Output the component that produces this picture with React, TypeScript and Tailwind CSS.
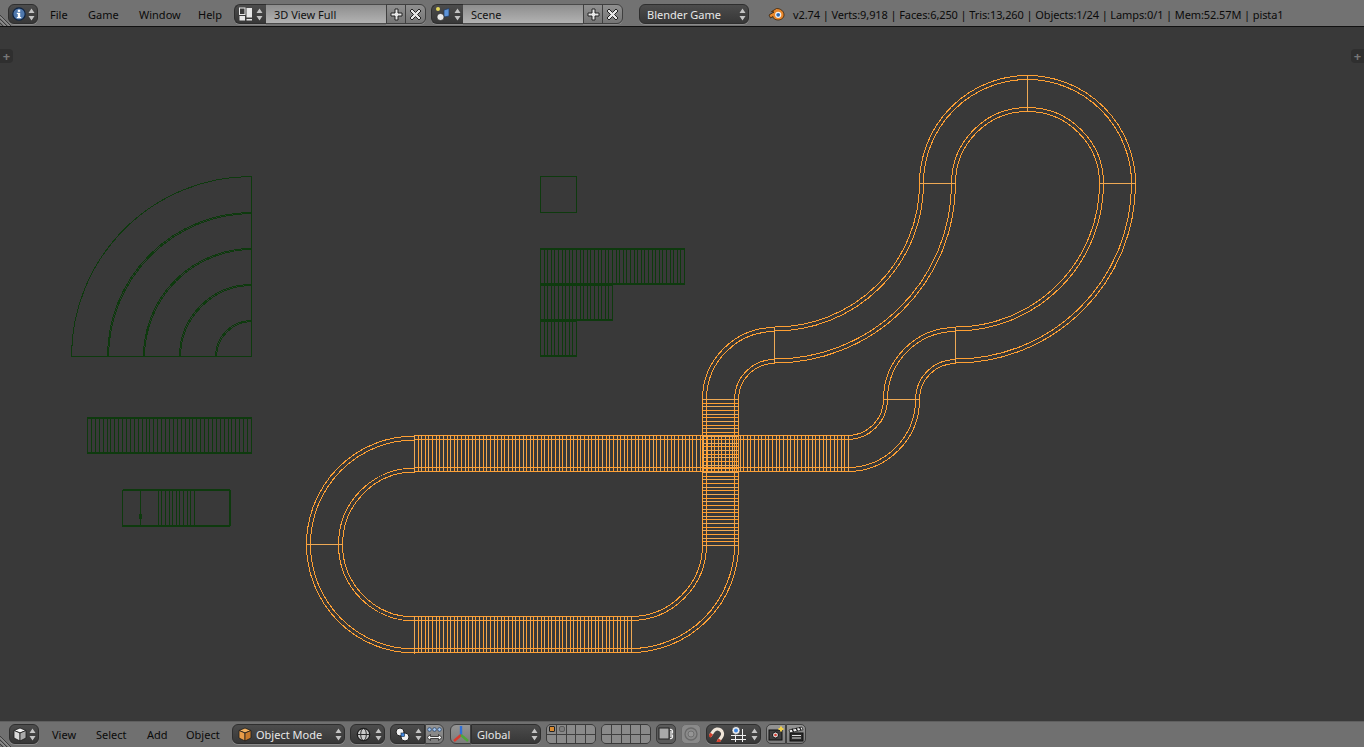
import React from "react";

const font = "font-['Noto_Sans',sans-serif]";
const dark = "bg-linear-to-b from-[#4c4c4c] to-[#373737] border border-[#2e2e2e] shadow-[0_1px_0_#8a8a8a]";
const grey = "bg-linear-to-b from-[#8f8f8f] to-[#767676] border border-[#3f3f3f] shadow-[0_1px_0_#8a8a8a]";
const toggle = "bg-linear-to-b from-[#949494] to-[#7c7c7c] border border-[#3f3f3f]";

function Arrows({ c = "#c4c4c4" }: { c?: string }) {
  return (
    <svg width="7" height="13" viewBox="0 0 7 13" className="shrink-0">
      <path d="M3.5 0.5L6.5 5H.5z M.5 8H6.5L3.5 12.5z" fill={c} />
    </svg>
  );
}

function Menu({ label, className }: { label: string; className: string }) {
  return <span className={`text-[11px] leading-none text-[#0a0a0a] ${className}`}>{label}</span>;
}

function Hatch() {
  return (
    <svg width="12" height="12" viewBox="0 0 12 12" className="shrink-0">
      <path d="M0 1L11 12M0 5L7 12M0 9L3 12" stroke="#3c3c3c" strokeWidth="1" />
      <path d="M0 2.5L9.5 12M0 6.5L5.5 12" stroke="#a0a0a0" strokeWidth="1" />
    </svg>
  );
}

function InfoIcon() {
  return (
    <svg width="14" height="14" viewBox="0 0 14 14">
      <circle cx="7" cy="7" r="6.2" fill="#4f78ad" stroke="#10233f" strokeWidth="1.2" />
      <rect x="5.8" y="2.7" width="2.4" height="2.2" fill="#fff" />
      <path d="M4.8 5.8H8.2V10H9.2V11.2H4.8V10H5.8V7H4.8z" fill="#fff" />
    </svg>
  );
}

function LayoutIcon() {
  return (
    <svg width="14" height="14" viewBox="0 0 14 14">
      <rect x="0.5" y="1" width="5.5" height="6.5" fill="#3a3a3a" stroke="#e8e8e8" />
      <rect x="0.5" y="9" width="5.5" height="4.5" fill="#e8e8e8" />
      <rect x="7.5" y="1" width="5.5" height="9.5" fill="#e8e8e8" />
      <rect x="7.5" y="12" width="5.5" height="1.5" fill="#e8e8e8" />
    </svg>
  );
}

function SceneIcon() {
  return (
    <svg width="16" height="16" viewBox="0 0 16 16">
      <circle cx="3" cy="3" r="2" fill="#e3d65c" />
      <path d="M9 4L14 2.5V10L9 11z" fill="#5d93d8" stroke="#1f3a63" strokeWidth=".7" />
      <circle cx="5.5" cy="11" r="3.6" fill="#e8e8e8" stroke="#222" strokeWidth=".7" />
    </svg>
  );
}

function Plus() {
  return (
    <svg width="13" height="13" viewBox="0 0 13 13">
      <path d="M5 1H8V5H12V8H8V12H5V8H1V5H5z" fill="#e6e6e6" stroke="#222" strokeWidth="1" />
    </svg>
  );
}

function Cross() {
  return (
    <svg width="13" height="13" viewBox="0 0 13 13">
      <path d="M3 1L6.5 4.5L10 1L12 3L8.5 6.5L12 10L10 12L6.5 8.5L3 12L1 10L4.5 6.5L1 3z" fill="#e6e6e6" stroke="#222" strokeWidth="1" />
    </svg>
  );
}

function NamedField({ icon, label, w, last }: { icon: React.ReactNode; label: string; w: string; last: string }) {
  return (
    <div className={`flex h-[20px] shrink-0 items-stretch ${last}`}>
      <div className={`${dark} flex w-[32px] items-center justify-center gap-[3px] rounded-l-[6px] border-r-0`}>
        {icon}
        <Arrows />
      </div>
      <div className={`bg-linear-to-b from-[#8e8e8e] to-[#b2b2b2] border-y border-[#4a4a4a] flex items-center pl-[8px] pt-[2px] text-[11px] text-[#111] ${w}`}>
        {label}
      </div>
      <div className={`${grey} flex w-[20px] items-center justify-center`}>
        <Plus />
      </div>
      <div className={`${grey} -ml-px flex w-[21px] items-center justify-center rounded-r-[6px]`}>
        <Cross />
      </div>
    </div>
  );
}

function BlenderLogo() {
  return (
    <svg width="17" height="14" viewBox="0 0 17 14">
      <path d="M1 8L6 5L3.5 4.6L8.5 1.5C12.5 1.5 16 4 16 8C16 11 13 13 10 13C7 13 5 11.3 5 9.5L2.5 11z" fill="#e8872c" stroke="#2a1500" strokeWidth=".7" />
      <circle cx="10.2" cy="7.8" r="3.1" fill="#f4f4f4" />
      <circle cx="10.2" cy="7.8" r="1.9" fill="#2d6bb5" />
    </svg>
  );
}

function Cube({ top, left, right }: { top: string; left: string; right: string }) {
  return (
    <svg width="14" height="15" viewBox="0 0 14 15">
      <path d="M7 1L13 3.5L7 6L1 3.5z" fill={top} stroke="#1c1c1c" strokeWidth=".8" />
      <path d="M1 3.5L7 6V14L1 11z" fill={left} stroke="#1c1c1c" strokeWidth=".8" />
      <path d="M13 3.5L7 6V14L13 11z" fill={right} stroke="#1c1c1c" strokeWidth=".8" />
    </svg>
  );
}

function Globe() {
  return (
    <svg width="15" height="15" viewBox="0 0 15 15" fill="none">
      <circle cx="7.5" cy="7.5" r="6.2" fill="#c9c9c9" stroke="#1a1a1a" strokeWidth="1.2" />
      <ellipse cx="7.5" cy="7.5" rx="2.8" ry="6" stroke="#2a2a2a" />
      <path d="M1.5 7.5H13.5" stroke="#2a2a2a" />
    </svg>
  );
}

function PivotIcon() {
  return (
    <svg width="15" height="15" viewBox="0 0 15 15">
      <circle cx="5" cy="5" r="4" fill="#f0f0f0" stroke="#222" />
      <circle cx="10" cy="10" r="4" fill="#f0f0f0" stroke="#222" />
      <rect x="6" y="6" width="3.5" height="3.5" fill="#3f86e0" stroke="#123" strokeWidth=".6" />
    </svg>
  );
}

function SnapTarget() {
  return (
    <svg width="17" height="17" viewBox="0 0 17 17" fill="none">
      <path d="M5.5 3V16M12.5 3V16M1 9.5H16M1 13.5H16" stroke="#f0f0f0" />
      <circle cx="6" cy="4.5" r="4" fill="#f0f0f0" stroke="#222" strokeWidth=".6" />
      <circle cx="6" cy="4.5" r="2" fill="#3f86e0" />
    </svg>
  );
}

function Layers({ marks }: { marks?: boolean }) {
  const cells = Array.from({ length: 10 }, (_, i) => i);
  return (
    <div className="grid h-[20px] w-[50px] shrink-0 grid-cols-5 grid-rows-2 overflow-hidden rounded-[5px] border border-[#3a3a3a] bg-[#3f3f3f] gap-px">
      {cells.map((i) => (
        <div key={i} className="relative bg-[#8a8a8a]">
          {marks && i === 0 && <div className="absolute left-[2px] top-[1px] h-[6px] w-[6px] rounded-[1px] bg-[#d98a30] border border-[#222]" />}
          {marks && i === 1 && <div className="absolute left-[2px] top-[1px] h-[6px] w-[6px] rounded-[2px] bg-[#7d7d7d] border border-[#5a5a5a]" />}
        </div>
      ))}
    </div>
  );
}

type Arc = { cx: number; cy: number; rx: number; ry: number; a: number; b: number };
const arcs: Arc[] = [
  { cx: 414.5, cy: 544.5, rx: 90, ry: 90.5, a: 90, b: 270 },
  { cx: 630.5, cy: 544.5, rx: 90, ry: 90, a: 90, b: 0 },
  { cx: 774.5, cy: 399.5, rx: 54, ry: 54, a: 180, b: 270 },
  { cx: 774.5, cy: 183.5, rx: 163, ry: 161.5, a: 90, b: 0 },
  { cx: 1027.5, cy: 183.5, rx: 90, ry: 90, a: 180, b: 360 },
  { cx: 955.5, cy: 183.5, rx: 162, ry: 161.5, a: 0, b: 90 },
  { cx: 955.5, cy: 399.5, rx: 54, ry: 54, a: 270, b: 180 },
  { cx: 847.5, cy: 399.5, rx: 54, ry: 54, a: 0, b: 90 },
];
const offs = [-18, -14, 14, 18];
function arcPath(k: Arc, d: number) {
  const r = (n: number) => (n * Math.PI) / 180;
  const x1 = k.cx + (k.rx + d) * Math.cos(r(k.a));
  const y1 = k.cy + (k.ry + d) * Math.sin(r(k.a));
  const x2 = k.cx + (k.rx + d) * Math.cos(r(k.b));
  const y2 = k.cy + (k.ry + d) * Math.sin(r(k.b));
  const large = Math.abs(k.b - k.a) > 180 ? 1 : 0;
  return `M${x1} ${y1}A${k.rx + d} ${k.ry + d} 0 ${large} ${k.b > k.a ? 1 : 0} ${x2} ${y2}`;
}
const OR = "#ffa033";
const OR2 = "#eea955";

function rungsV(x0: number, x1: number, n: number, y0: number, y1: number) {
  return Array.from({ length: n + 1 }, (_, i) => {
    const x = Math.round(x0 + ((x1 - x0) * i) / n) + 0.5;
    return <path key={i} d={`M${x} ${y0}V${y1}`} stroke={i % 2 ? OR : OR2} />;
  });
}
function rungsH(y0: number, y1: number, n: number, x0: number, x1: number) {
  return Array.from({ length: n + 1 }, (_, i) => {
    const y = Math.round(y0 + ((y1 - y0) * i) / n) + 0.5;
    return <path key={i} d={`M${x0} ${y}H${x1}`} stroke={i % 2 ? OR : OR2} />;
  });
}

function Strip({ x, y, w, h, n }: { x: number; y: number; w: number; h: number; n: number }) {
  const lines = Array.from({ length: n + 1 }, (_, i) => Math.round(x + (w * i) / n) + 0.5);
  const e = x + w + 1;
  return (
    <g>
      {lines.map((l, i) => (
        <path key={i} d={`M${l} ${y}V${y + h}`} />
      ))}
      <path d={`M${x} ${y + 0.5}H${e}M${x} ${y + 1.5}H${e}M${x} ${y + h + 0.5}H${e}M${x} ${y + h - 0.5}H${e}`} />
    </g>
  );
}

function Track() {
  return (
    <g fill="none" stroke={OR} strokeWidth="1" shapeRendering="crispEdges">
      {arcs.flatMap((k, i) => offs.map((d) => <path key={`${i}${d}`} d={arcPath(k, d)} />))}
      {[435.5, 439.5, 467.5, 471.5].map((y) => <path key={y} d={`M414 ${y}H848`} />)}
      {[616.5, 620.5, 648.5, 652.5].map((y) => <path key={y} d={`M414 ${y}H631`} />)}
      {[702.5, 706.5, 734.5, 738.5].map((x) => <path key={x} d={`M${x} 399V545`} />)}
      {rungsV(414, 848, 120, 435, 472)}
      {rungsV(414, 631, 60, 616, 653)}
      {rungsH(399, 545, 40, 702, 739)}
      <g stroke={OR2}>
        <path d="M919.5 183.5H955.5M1099.5 183.5H1135.5M1027.5 75.5V111.5M774.5 327V363M955.5 327V363M883.5 399.5H919.5M306.5 544.5H342.5" />
      </g>
    </g>
  );
}

function UVs() {
  const radii = [36, 72, 108, 144];
  return (
    <g fill="none" stroke="#0e3a0e" strokeWidth="1" shapeRendering="crispEdges">
      <path d="M251.5 176.5V356.5H71.5" />
      <path d="M71.5 356.5A180 180 0 0 1 251.5 176.5" />
      {radii.map((r) => (
        <g key={r}>
          <path d={`M${251.5 - r} 356.5A${r} ${r} 0 0 1 251.5 ${356.5 - r}`} />
          <path d={`M${252.5 - r} 356.5A${r} ${r} 0 0 1 251.5 ${357.5 - r}`} />
        </g>
      ))}
      <path d="M540.5 176.5H576.5V212.5H540.5z" />
      <Strip x={540} y={248} w={144} h={36} n={40} />
      <Strip x={540} y={284} w={72} h={36} n={20} />
      <Strip x={540} y={320} w={36} h={36} n={10} />
      <Strip x={87} y={417} w={164} h={36} n={42} />
      <path d="M122.5 490.5H229.5V525.5H122.5z M122.5 489.5H229.5M230.5 490V526M122 526.5H230" />
      {[140, 158, 161, 165, 169, 172, 176, 179, 183, 187, 190, 194].map((x) => (
        <path key={x} d={`M${x + 0.5} 490V526`} />
      ))}
      <rect x="139" y="514" width="3" height="5" fill="#0e3a0e" stroke="none" />
    </g>
  );
}

export default function App() {
  return (
    <div className={`${font} flex h-[747px] w-[1364px] flex-col overflow-hidden bg-[#393939]`}>
      {/* top bar */}
      <header className="relative flex h-[27px] shrink-0 items-center border-b border-[#111] bg-[#727272] pt-[2px]">
        <div className="absolute bottom-0 left-0"><Hatch /></div>
        <div className={`${dark} ml-[8px] flex h-[20px] w-[30px] items-center justify-center gap-[2px] rounded-[6px]`}>
          <InfoIcon />
          <Arrows />
        </div>
        <Menu label="File" className="ml-[12px] w-[38px]" />
        <Menu label="Game" className="w-[51px]" />
        <Menu label="Window" className="w-[59px]" />
        <Menu label="Help" className="w-[36px]" />
        <NamedField icon={<LayoutIcon />} label="3D View Full" w="w-[120px]" last="" />
        <NamedField icon={<SceneIcon />} label="Scene" w="w-[120px]" last="ml-[5px]" />
        <div className={`${dark} ml-[16px] flex h-[20px] w-[110px] items-center justify-between rounded-[6px] pl-[7px] pr-[2px] text-[11px] text-[#e8e8e8]`}>
          <span className="pt-[2px]">Blender Game</span>
          <Arrows />
        </div>
        <div className="ml-[19px]"><BlenderLogo /></div>
        <span className="ml-[8px] whitespace-nowrap pt-[2px] text-[11px] tracking-[-0.1px] text-[#0a0a0a]">
          v2.74 | Verts:9,918 | Faces:6,250 | Tris:13,260 | Objects:1/24 | Lamps:0/1 | Mem:52.57M | pista1
        </span>
      </header>

      {/* viewport */}
      <main className="relative min-h-0 flex-1">
        <svg className="block h-full w-full" viewBox="0 27 1364 694">
          <UVs />
          <Track />
        </svg>
        <div className="absolute left-0 top-[22px] flex h-[14px] w-[13px] items-center justify-center rounded-r-[4px] bg-[#2f2f2f] text-[13px] font-bold leading-none text-[#777]">+</div>
        <div className="absolute right-0 top-[22px] flex h-[14px] w-[13px] items-center justify-center rounded-l-[4px] bg-[#2f2f2f] text-[13px] font-bold leading-none text-[#777]">+</div>
      </main>

      {/* bottom bar */}
      <footer className="relative flex h-[26px] shrink-0 items-center border-t border-[#5f5f5f] bg-[#707070] pb-[1px]">
        <div className="absolute bottom-0 left-0"><Hatch /></div>
        <div className={`${dark} ml-[9px] flex h-[20px] w-[30px] items-center justify-center gap-[2px] rounded-[6px]`}>
          <Cube top="#f4f4f4" left="#dcdcdc" right="#a9a9a9" />
          <Arrows />
        </div>
        <Menu label="View" className="ml-[13px] w-[44px]" />
        <Menu label="Select" className="w-[51px]" />
        <Menu label="Add" className="w-[39px]" />
        <Menu label="Object" className="w-[46px]" />
        <div className={`${dark} flex h-[20px] w-[113px] items-center justify-between rounded-[6px] pl-[5px] pr-[2px] text-[11px] text-[#e8e8e8]`}>
          <span className="flex items-center gap-[4px]">
            <Cube top="#f0b060" left="#e89c48" right="#c77a2c" />
            <span className="pt-[2px]">Object Mode</span>
          </span>
          <Arrows />
        </div>
        <div className={`${dark} ml-[5px] flex h-[20px] w-[35px] items-center justify-between rounded-[6px] pl-[5px] pr-[2px]`}>
          <Globe />
          <Arrows />
        </div>
        <div className={`${dark} ml-[5px] flex h-[20px] w-[35px] items-center justify-between rounded-l-[6px] pl-[4px] pr-[2px]`}>
          <PivotIcon />
          <Arrows />
        </div>
        <div className={`${toggle} flex h-[20px] w-[19px] items-center justify-center rounded-r-[6px]`}>
          <svg width="17" height="17" viewBox="0 0 17 17" fill="none">
            <circle cx="3.5" cy="3.5" r="1.8" fill="#a8c8ee" stroke="#1b3b66" strokeWidth=".7" />
            <circle cx="8.5" cy="3.5" r="1.8" fill="#a8c8ee" stroke="#1b3b66" strokeWidth=".7" />
            <circle cx="13.5" cy="3.5" r="1.8" fill="#a8c8ee" stroke="#1b3b66" strokeWidth=".7" />
            <path d="M1 11.5L4.5 8.5V10.5H12.5V8.5L16 11.5L12.5 14.5V12.5H4.5V14.5z" fill="#f4f4f4" stroke="#222" strokeWidth=".8" />
          </svg>
        </div>
        <div className="ml-[6px] flex h-[20px] w-[91px] items-stretch">
          <div className={`${toggle} flex w-[21px] items-center justify-center rounded-l-[6px]`}>
            <svg width="18" height="18" viewBox="0 0 18 18" fill="none" strokeWidth="2.4">
              <path d="M9 10V1" stroke="#2f6fd6" />
              <path d="M9 10L2 16" stroke="#d83a2e" />
              <path d="M9 10L16 16" stroke="#4fa63a" />
            </svg>
          </div>
          <div className={`${dark} flex flex-1 items-center justify-between rounded-r-[6px] pl-[5px] pr-[2px] text-[11px] text-[#e8e8e8]`}>
            <span className="pt-[2px]">Global</span>
            <Arrows />
          </div>
        </div>
        <div className="ml-[5px]"><Layers marks /></div>
        <div className="ml-[5px]"><Layers /></div>
        <div className="ml-[5px] flex h-[20px] w-[20px] items-center justify-center rounded-[5px] border border-[#3a3a3a] bg-[#5a5a5a]">
          <svg width="16" height="16" viewBox="0 0 16 16" fill="none">
            <rect x="1" y="2" width="10" height="11" fill="#a8a8a8" stroke="#222" />
            <path d="M12 3.5A2 2 0 0 1 14.5 6V7.5M12 12.5A2 2 0 0 0 14.5 10V8.5M13 5V11" stroke="#eee" strokeWidth="1.2" />
          </svg>
        </div>
        <div className="ml-[5px] flex h-[20px] w-[20px] items-center justify-center rounded-[5px] border border-[#6b6b6b] bg-[#8a8a8a]">
          <svg width="14" height="14" viewBox="0 0 14 14" fill="none">
            <circle cx="7" cy="7" r="6" stroke="#6a6a6a" strokeWidth="1.3" />
            <circle cx="7" cy="7" r="3" fill="#969696" stroke="#6f6f6f" />
          </svg>
        </div>
        <div className={`${dark} ml-[5px] flex h-[20px] w-[55px] items-center rounded-[6px] pl-[2px] pr-[2px]`}>
          <svg width="17" height="16" viewBox="0 0 17 16" fill="none" className="shrink-0">
            <g transform="rotate(35 8.5 8)">
              <path d="M3.5 14V8A5 5 0 0 1 13.5 8V14" stroke="#f0e6da" strokeWidth="3.2" />
              <path d="M3.5 15V11M13.5 15V11" stroke="#d1402e" strokeWidth="3.2" />
            </g>
          </svg>
          <div className="ml-[4px]"><SnapTarget /></div>
          <div className="ml-auto"><Arrows /></div>
        </div>
        <div className={`${toggle} ml-[5px] flex h-[20px] w-[20px] items-center justify-center rounded-l-[5px]`}>
          <svg width="17" height="16" viewBox="0 0 17 16" fill="none">
            <rect x="1" y="4" width="13" height="10" fill="#3d3d3d" stroke="#111" />
            <circle cx="7.5" cy="9" r="3" fill="#d9d9d9" stroke="#111" />
            <circle cx="7.5" cy="9" r="1.3" fill="#d83a2e" />
            <path d="M13 0.5V5.5M10.5 3H15.5" stroke="#f0d04a" strokeWidth="2" />
          </svg>
        </div>
        <div className={`${toggle} flex h-[20px] w-[20px] items-center justify-center rounded-r-[5px]`}>
          <svg width="17" height="16" viewBox="0 0 17 16" fill="none">
            <rect x="2" y="7" width="13" height="8" fill="#2b2b2b" stroke="#111" />
            <path d="M1 4L14 1L15 3.8L2 6.8z" fill="#eee" stroke="#111" strokeWidth=".7" />
            <path d="M4 2.8L5.5 6M8 2L9.5 5M11.5 1.2L13 4.2" stroke="#111" strokeWidth="1.2" />
            <path d="M4 9.5H13M4 12H13" stroke="#ddd" />
          </svg>
        </div>
      </footer>
    </div>
  );
}
